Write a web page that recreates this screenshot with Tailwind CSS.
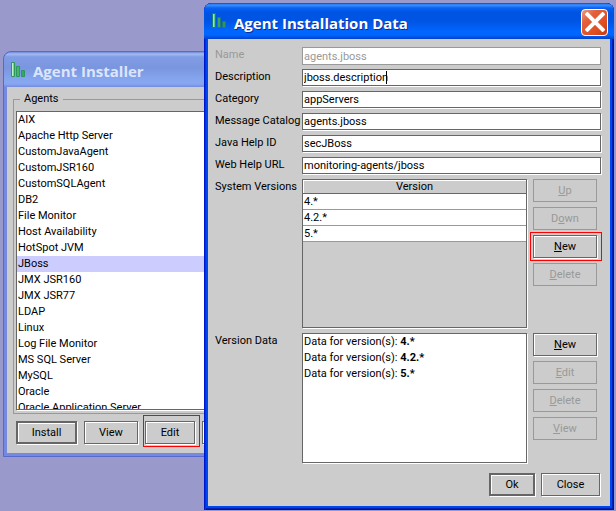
<!DOCTYPE html>
<html lang="en">
<head>
<meta charset="utf-8">
<meta name="viewport" content="width=device-width, initial-scale=1">
<title>Agent Installer</title>
<script src="https://cdn.jsdelivr.net/npm/@tailwindcss/browser@4"></script>
</head>
<body class="relative min-h-screen overflow-hidden bg-[#9999cc] font-['Roboto','Noto_Sans',sans-serif] text-[11px] leading-4 text-black">

<!-- Agent list window -->
<section aria-label="Agent Installer" class="absolute left-[3px] right-8 top-[51px] flex flex-col rounded-t-lg border border-[#5a68cc] bg-[#748ae0] px-[3px] pb-[3px]">
  <header class="-mx-[3px] flex h-[35px] items-center gap-1.5 rounded-t-lg bg-[linear-gradient(#6f86da_0,#a3bbf4_2px,#7f9ce4_5px,#7a96df_16px,#86a6f0_28px,#86a6f0_32px,#748ae0_35px)] px-[7px]">
    <svg class="h-[18px] w-4 shrink-0" viewBox="0 0 16 18" aria-hidden="true"><g stroke="#2f9560"><path fill="#74e084" d="M.5 1.500h3v14h-3z"/><path fill="#43b967" d="M5.500 5.500h3v10h-3z"/><path fill="#36a95c" d="M10.500 9.500h3v6h-3z"/></g><path d="M1.500 2v13" stroke="#baf5bd"/></svg>
    <h1 class="pt-0.5 font-['Open_Sans',sans-serif] text-[15px] font-bold leading-5 text-[#dce5fb]">Agent Installer</h1>
  </header>
  <div class="bg-[#cccccc] px-1.5 pb-[9px] pt-1">
    <fieldset class="border border-[#999999] px-0.5 pb-[3px]">
      <legend class="ml-1 px-1">Agents</legend>
      <ul class="mt-1 h-[299px] overflow-hidden border border-[#666666] bg-white shadow-[1px_1px_0_#fff] *:h-4 *:px-px">
        <li>AIX</li><li>Apache Http Server</li><li>CustomJavaAgent</li><li>CustomJSR160</li><li>CustomSQLAgent</li><li>DB2</li><li>File Monitor</li><li>Host Availability</li><li>HotSpot JVM</li><li class="bg-[#ccccff]">JBoss</li><li>JMX JSR160</li><li>JMX JSR77</li><li>LDAP</li><li>Linux</li><li>Log File Monitor</li><li>MS SQL Server</li><li>MySQL</li><li>Oracle</li><li>Oracle Application Server</li>
      </ul>
    </fieldset>
    <div class="mt-[7px] flex gap-[7px] px-[3px]">
      <button class="h-[23px] w-[61px] border-2 border-[#666666] shadow-[1px_1px_0_#fff,inset_1px_1px_0_#fff]">Install</button>
      <button class="h-[23px] w-[54px] border border-[#666666] shadow-[1px_1px_0_#fff,inset_1px_1px_0_#fff]">View</button>
      <button class="relative h-[23px] w-[50px] border border-[#666666] shadow-[1px_1px_0_#fff,inset_1px_1px_0_#fff]">Edit<span class="absolute -bottom-[4px] -left-[3px] -right-[6px] -top-[7px] border border-[#ff0000]"></span></button>
      <button aria-label="Delete" class="h-[23px] w-[60px] border border-[#666666] shadow-[1px_1px_0_#fff,inset_1px_1px_0_#fff]"></button>
    </div>
  </div>
</section>

<!-- Installation data dialog -->
<section role="dialog" aria-labelledby="dialog-title" class="absolute left-[204px] right-0.5 top-[3px] flex flex-col rounded-t-lg bg-[#0046f0] px-1 pb-1 shadow-[inset_1px_0_0_#0018c8,inset_2px_0_0_#0830d8,inset_-1px_0_0_#001590,inset_-2px_0_0_#0020b4,inset_0_-1px_0_#001590,inset_0_-2px_0_#0020b4]">
  <header class="-mx-1 flex h-9 items-center gap-1.5 rounded-t-lg bg-[linear-gradient(#0a48cf_0,#3c93ff_2px,#0a62f2_5px,#0054e3_9px,#0054e3_18px,#0066ff_28px,#0066ff_32px,#0040cc_36px)] pl-2 pr-1.5">
    <svg class="h-[18px] w-4 shrink-0" viewBox="0 0 16 18" aria-hidden="true"><g stroke="#1c7a7c"><path fill="#5fc98a" d="M.5 1.500h3v14h-3z"/><path fill="#36a468" d="M5.500 5.500h3v10h-3z"/><path fill="#2c965e" d="M10.500 9.500h3v6h-3z"/></g><path d="M1.500 2v13" stroke="#9be6ae"/></svg>
    <h2 id="dialog-title" class="grow pt-1 font-['Open_Sans',sans-serif] text-[15px] font-bold leading-5 text-white [text-shadow:1px_1px_0_#0a2f9c]">Agent Installation Data</h2>
    <button aria-label="Close window" class="mt-0.5 flex h-[27px] w-[27px] items-center justify-center rounded-[4px] border border-white bg-[linear-gradient(135deg,#ee9a80_0,#e3603c_30%,#e04e22_70%,#c43a10_100%)]">
      <svg class="h-5 w-5" viewBox="0 0 20 20" aria-hidden="true"><path d="M1 1l18 18M19 1L1 19" stroke="#fff" stroke-width="4"/></svg>
    </button>
  </header>

  <form class="bg-[#cccccc] px-[7px] pb-[10px] pt-2">
    <div class="grid auto-rows-[22px] grid-cols-[87px_1fr] items-start whitespace-nowrap pr-0.5">
      <label for="name" class="text-[#999999]">Name</label>
      <input id="name" disabled value="agents.jboss" class="h-[18px] w-full border border-[#999999] bg-white px-px text-[#999999]">
      <label for="description">Description</label>
      <div class="relative">
        <input id="description" value="jboss.description" class="block h-[17px] w-full border border-[#666666] bg-white px-px shadow-[1px_1px_0_#fff]">
        <span class="absolute left-[84px] top-0.5 h-[13px] w-px bg-black"></span>
      </div>
      <label for="category">Category</label>
      <input id="category" value="appServers" class="h-[17px] w-full border border-[#666666] bg-white px-px shadow-[1px_1px_0_#fff]">
      <label for="catalog">Message Catalog</label>
      <input id="catalog" value="agents.jboss" class="h-[17px] w-full border border-[#666666] bg-white px-px shadow-[1px_1px_0_#fff]">
      <label for="java-help">Java Help ID</label>
      <input id="java-help" value="secJBoss" class="h-[17px] w-full border border-[#666666] bg-white px-px shadow-[1px_1px_0_#fff]">
      <label for="web-help">Web Help URL</label>
      <input id="web-help" value="monitoring-agents/jboss" class="h-[17px] w-full border border-[#666666] bg-white px-px shadow-[1px_1px_0_#fff]">
    </div>

    <div class="grid grid-cols-[87px_1fr_64px] pr-1.5">
      <span id="versions-label">System Versions</span>
      <div class="mr-1.5 h-[149px] border border-[#666666] shadow-[1px_1px_0_#fff]">
        <table aria-labelledby="versions-label" class="w-full border-separate border-spacing-0">
          <thead><tr><th class="h-[14px] border-b border-[#666666] p-0 font-normal leading-[13px] shadow-[inset_1px_1px_0_#fff]">Version</th></tr></thead>
          <tbody class="bg-white">
            <tr><td class="h-4 border-b border-[#999999] px-px py-0 leading-[15px]">4.*</td></tr>
            <tr><td class="h-4 border-b border-[#999999] px-px py-0 leading-[15px]">4.2.*</td></tr>
            <tr><td class="h-4 border-b border-[#999999] px-px py-0 leading-[15px]">5.*</td></tr>
          </tbody>
        </table>
      </div>
      <div class="flex flex-col gap-[5px]">
        <button type="button" disabled class="h-[23px] border border-[#999999] text-[#999999]"><u>U</u>p</button>
        <button type="button" disabled class="h-[23px] border border-[#999999] text-[#999999]">D<u>o</u>wn</button>
        <button type="button" class="relative h-[23px] border border-[#666666] shadow-[1px_1px_0_#fff,inset_1px_1px_0_#fff]"><u>N</u>ew<span class="absolute -bottom-[4px] -left-[4px] -right-[6px] -top-[4px] border border-[#ff0000]"></span></button>
        <button type="button" disabled class="h-[23px] border border-[#999999] text-[#999999]"><u>D</u>elete</button>
      </div>
    </div>

    <div class="mt-[5px] grid grid-cols-[87px_1fr_64px] pr-1.5">
      <span id="data-label">Version Data</span>
      <ul aria-labelledby="data-label" class="mr-1.5 h-[130px] border border-[#666666] bg-white px-px shadow-[1px_1px_0_#fff]">
        <li>Data for version(s): <b>4.*</b></li>
        <li>Data for version(s): <b>4.2.*</b></li>
        <li>Data for version(s): <b>5.*</b></li>
      </ul>
      <div class="flex flex-col gap-[5px]">
        <button type="button" class="h-[23px] border border-[#666666] shadow-[1px_1px_0_#fff,inset_1px_1px_0_#fff]"><u>N</u>ew</button>
        <button type="button" disabled class="h-[23px] border border-[#999999] text-[#999999]"><u>E</u>dit</button>
        <button type="button" disabled class="h-[23px] border border-[#999999] text-[#999999]"><u>D</u>elete</button>
        <button type="button" disabled class="h-[23px] border border-[#999999] text-[#999999]"><u>V</u>iew</button>
      </div>
    </div>

    <div class="mt-[10px] flex justify-end gap-1.5 pr-[3px]">
      <button type="submit" class="h-[23px] w-[46px] border-2 border-[#666666] shadow-[1px_1px_0_#fff,inset_1px_1px_0_#fff]">Ok</button>
      <button type="button" class="h-[23px] w-[59px] border border-[#666666] shadow-[1px_1px_0_#fff,inset_1px_1px_0_#fff]">Close</button>
    </div>
  </form>
</section>
</body>
</html>
